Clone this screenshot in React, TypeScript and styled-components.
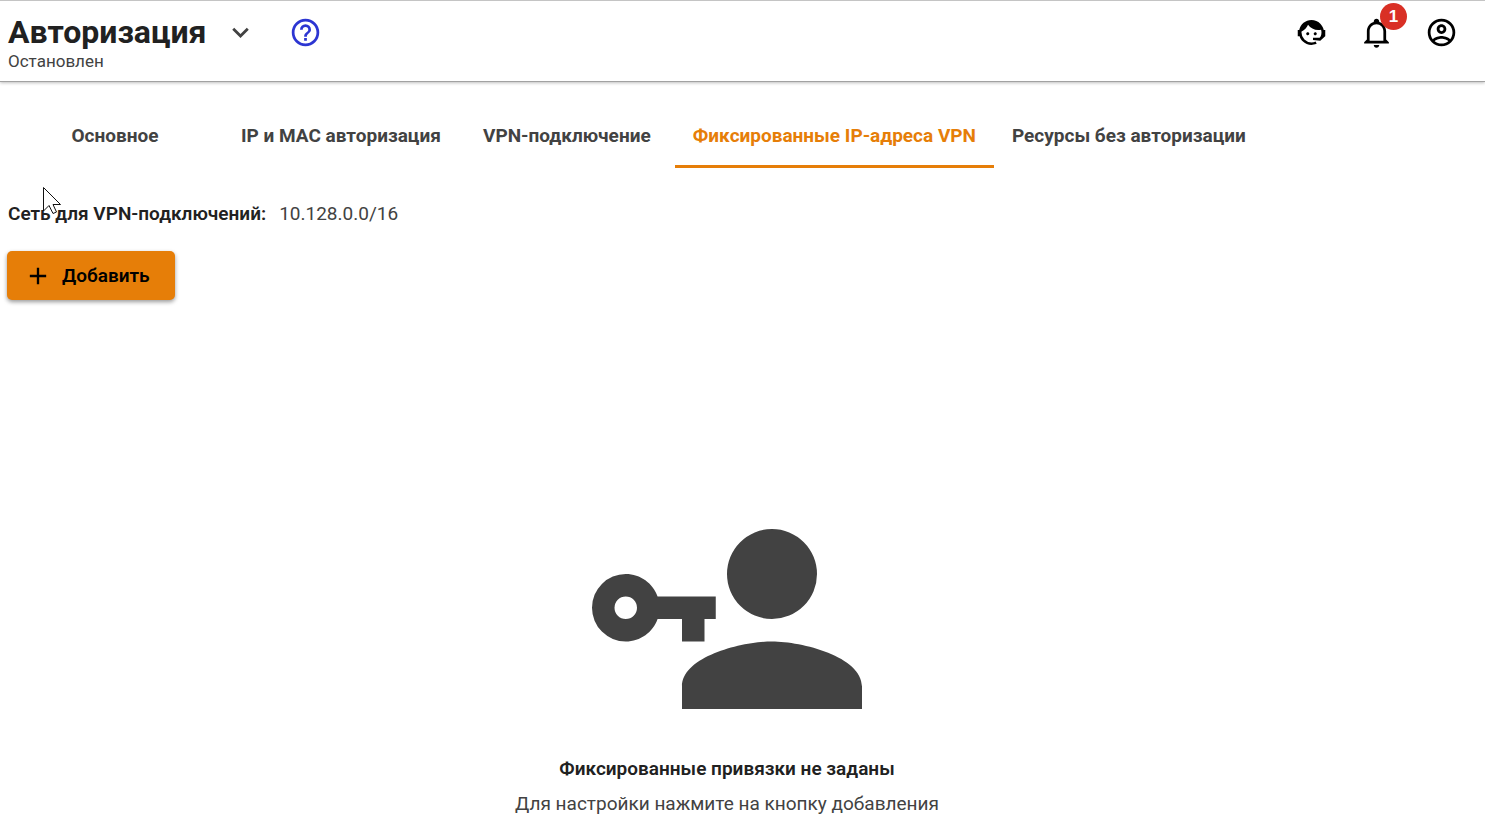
import React from 'react';
import styled, { createGlobalStyle } from 'styled-components';

const GlobalStyle = createGlobalStyle`
  * { box-sizing: border-box; }
  body {
    margin: 0;
    background: #fff;
    color: #424242;
    font-family: Roboto, "Liberation Sans", sans-serif;
    font-size: 19px;
    line-height: 24px;
  }
  h1, h2, p, dl, dd { margin: 0; }
`;

const Page = styled.div`
  min-height: 100vh;
  display: flex;
  flex-direction: column;
`;

const Header = styled.header`
  display: flex;
  justify-content: space-between;
  align-items: flex-start;
  padding: 12px 27px 10px 8px;
  border-top: 1px solid #c4c4c4;
  border-bottom: 1px solid #a2a2a2;
  box-shadow: 0 1px 3px rgba(0, 0, 0, 0.25);
`;

const TitleRow = styled.div`
  display: flex;
  align-items: center;
`;

const Title = styled.h1`
  font-size: 32px;
  line-height: 38px;
  font-weight: 700;
  color: #212121;
`;

const Status = styled.p`
  font-size: 17px;
  line-height: 20px;
`;

const IconButton = styled.button<{ $color?: string; $space?: number }>`
  position: relative;
  display: flex;
  padding: 0;
  border: 0;
  background: none;
  color: ${({ $color }) => $color ?? '#000'};
  margin-left: ${({ $space }) => $space ?? 0}px;
  cursor: pointer;
`;

const Actions = styled.div`
  display: flex;
  gap: 32px;
  padding-top: 3px;
`;

const Badge = styled.span`
  position: absolute;
  top: -13px;
  right: -14px;
  width: 27px;
  height: 27px;
  border-radius: 50%;
  background: #d93025;
  color: #fff;
  font-size: 17px;
  line-height: 27px;
  font-weight: 700;
  text-align: center;
`;

const Main = styled.main`
  flex: 1;
  display: flex;
  flex-direction: column;
  align-items: flex-start;
  padding: 22px 38px 11px 7px;
`;

const Tabs = styled.nav`
  display: flex;
`;

const Tab = styled.a<{ $active?: boolean }>`
  min-width: 216px;
  padding: 20px 18px 17px;
  border-bottom: 3px solid ${({ $active }) => ($active ? '#e67e08' : 'transparent')};
  color: ${({ $active }) => ($active ? '#e67e08' : '#424242')};
  font-weight: 700;
  text-align: center;
  text-decoration: none;
  white-space: nowrap;
`;

const Network = styled.dl`
  display: flex;
  gap: 13px;
  padding: 34px 1px 25px;
`;

const NetworkLabel = styled.dt`
  font-weight: 600;
  color: #212121;
`;

const AddButton = styled.button`
  display: flex;
  align-items: center;
  gap: 10px;
  min-width: 168px;
  padding: 11px 22px 10px 17px;
  border: 0;
  border-radius: 5px;
  background: #e67e08;
  color: #000;
  box-shadow: 0 2px 4px rgba(0, 0, 0, 0.4);
  font: inherit;
  font-weight: 600;
  cursor: pointer;
`;

const Empty = styled.section`
  flex: 1;
  align-self: stretch;
  display: flex;
  flex-direction: column;
  align-items: center;
  justify-content: flex-end;
  text-align: center;
`;

const EmptyTitle = styled.h2`
  margin: 3px 0 11px;
  font-size: 19px;
  line-height: 24px;
  font-weight: 600;
  color: #212121;
`;

const icons = {
  chevron: 'M7.41,8.58L12,13.17L16.59,8.58L18,10L12,16L6,10L7.41,8.58Z',
  help: 'M11,18H13V16H11V18M12,2A10,10 0 0,0 2,12A10,10 0 0,0 12,22A10,10 0 0,0 22,12A10,10 0 0,0 12,2M12,20C7.59,20 4,16.41 4,12C4,7.59 7.59,4 12,4C16.41,4 20,7.59 20,12C20,16.41 16.41,20 12,20M12,6A4,4 0 0,0 8,10H10A2,2 0 0,1 12,8A2,2 0 0,1 14,10C14,12 11,11.75 11,15H13C13,12.75 16,12.5 16,10A4,4 0 0,0 12,6Z',
  agent: 'M18.72,14.76C19.07,13.91 19.26,13 19.26,12C19.26,11.28 19.15,10.59 18.96,9.95C18.31,10.1 17.63,10.18 16.92,10.18C13.86,10.18 11.15,8.67 9.5,6.34C8.61,8.5 6.91,10.26 4.77,11.22C4.73,11.47 4.73,11.74 4.73,12A7.27,7.27 0 0,0 12,19.27C13.05,19.27 14.06,19.04 14.97,18.63C15.54,19.72 15.8,20.26 15.78,20.26C14.14,20.81 12.87,21.08 12,21.08C9.58,21.08 7.27,20.13 5.57,18.42C4.53,17.38 3.76,16.11 3.33,14.73H2V10.18H3.09C3.93,6.04 7.6,2.92 12,2.92C14.4,2.92 16.71,3.87 18.42,5.58C19.69,6.84 20.54,8.45 20.89,10.18H22V14.73H21.94L18.38,18L13.08,17.4V15.73H17.91L18.72,14.76M9.27,11.77C9.57,11.77 9.86,11.89 10.07,12.11C10.28,12.32 10.4,12.61 10.4,12.91C10.4,13.21 10.28,13.5 10.07,13.71C9.86,13.92 9.57,14.04 9.27,14.04C8.64,14.04 8.13,13.54 8.13,12.91C8.13,12.28 8.64,11.77 9.27,11.77M14.72,11.77C15.35,11.77 15.85,12.28 15.85,12.91C15.85,13.54 15.35,14.04 14.72,14.04C14.09,14.04 13.58,13.54 13.58,12.91A1.14,1.14 0 0,1 14.72,11.77Z',
  bell: 'M10 21H14C14 22.1 13.1 23 12 23S10 22.1 10 21M21 19V20H3V19L5 17V11C5 7.9 7 5.2 10 4.3V4C10 2.9 10.9 2 12 2S14 2.9 14 4V4.3C17 5.2 19 7.9 19 11V17L21 19M17 11C17 8.2 14.8 6 12 6S7 8.2 7 11V18H17V11Z',
  account: 'M12,2A10,10 0 0,0 2,12A10,10 0 0,0 12,22A10,10 0 0,0 22,12A10,10 0 0,0 12,2M7.07,18.28C7.5,17.38 10.12,16.5 12,16.5C13.88,16.5 16.5,17.38 16.93,18.28C15.57,19.36 13.86,20 12,20C10.14,20 8.43,19.36 7.07,18.28M18.36,16.83C16.93,15.09 13.46,14.5 12,14.5C10.54,14.5 7.07,15.09 5.64,16.83C4.62,15.5 4,13.82 4,12C4,7.59 7.59,4 12,4C16.41,4 20,7.59 20,12C20,13.82 19.38,15.5 18.36,16.83M12,6C10.06,6 8.5,7.56 8.5,9.5C8.5,11.44 10.06,13 12,13C13.94,13 15.5,11.44 15.5,9.5C15.5,7.56 13.94,6 12,6M12,11A1.5,1.5 0 0,1 10.5,9.5A1.5,1.5 0 0,1 12,8A1.5,1.5 0 0,1 13.5,9.5A1.5,1.5 0 0,1 12,11Z',
  plus: 'M19,13H13V19H11V13H5V11H11V5H13V11H19V13Z',
  accountKey: 'M11,10V12H10V14H8V12H5.83C5.42,13.17 4.31,14 3,14A3,3 0 0,1 0,11A3,3 0 0,1 3,8C4.31,8 5.42,8.83 5.83,10H11M3,10A1,1 0 0,0 2,11A1,1 0 0,0 3,12A1,1 0 0,0 4,11A1,1 0 0,0 3,10M16,14C18.67,14 24,15.34 24,18V20H8V18C8,15.34 13.33,14 16,14M16,12A4,4 0 0,1 12,8A4,4 0 0,1 16,4A4,4 0 0,1 20,8A4,4 0 0,1 16,12Z',
};

function Icon({ name, size = 33 }: { name: keyof typeof icons; size?: number }) {
  return (
    <svg width={size} height={size} viewBox="0 0 24 24" fill="currentColor" aria-hidden="true">
      <path d={icons[name]} />
    </svg>
  );
}

const CursorArrow = styled.svg`
  position: absolute;
  left: 43px;
  top: 187px;
  pointer-events: none;
`;

const tabs = [
  'Основное',
  'IP и MAC авторизация',
  'VPN-подключение',
  'Фиксированные IP-адреса VPN',
  'Ресурсы без авторизации',
];
const activeTab = 3;

export default function App() {
  return (
    <Page>
      <GlobalStyle />
      <Header>
        <div>
          <TitleRow>
            <Title>Авторизация</Title>
            <IconButton type="button" aria-label="Меню службы" $color="#424242" $space={18}>
              <Icon name="chevron" />
            </IconButton>
            <IconButton type="button" aria-label="Справка" $color="#2c35d2" $space={32}>
              <Icon name="help" />
            </IconButton>
          </TitleRow>
          <Status>Остановлен</Status>
        </div>
        <Actions>
          <IconButton type="button" aria-label="Поддержка">
            <Icon name="agent" />
          </IconButton>
          <IconButton type="button" aria-label="Уведомления">
            <Icon name="bell" />
            <Badge>1</Badge>
          </IconButton>
          <IconButton type="button" aria-label="Профиль">
            <Icon name="account" />
          </IconButton>
        </Actions>
      </Header>
      <Main>
        <Tabs>
          {tabs.map((label, i) => (
            <Tab key={label} href="#" $active={i === activeTab} aria-current={i === activeTab ? 'page' : undefined}>
              {label}
            </Tab>
          ))}
        </Tabs>
        <Network>
          <NetworkLabel>Сеть для VPN-подключений:</NetworkLabel>
          <dd>10.128.0.0/16</dd>
        </Network>
        <AddButton type="button">
          <Icon name="plus" size={28} />
          Добавить
        </AddButton>
        <Empty>
          <Icon name="accountKey" size={270} />
          <EmptyTitle>Фиксированные привязки не заданы</EmptyTitle>
          <p>Для настройки нажмите на кнопку добавления</p>
        </Empty>
      </Main>
      <CursorArrow width="19" height="28" viewBox="0 0 19 28" aria-hidden="true">
        <path d="M.5 .5V24L6 18.5L10 26.5L13.5 25L10 17.5H17.5Z" fill="#fff" stroke="#111" />
      </CursorArrow>
    </Page>
  );
}
